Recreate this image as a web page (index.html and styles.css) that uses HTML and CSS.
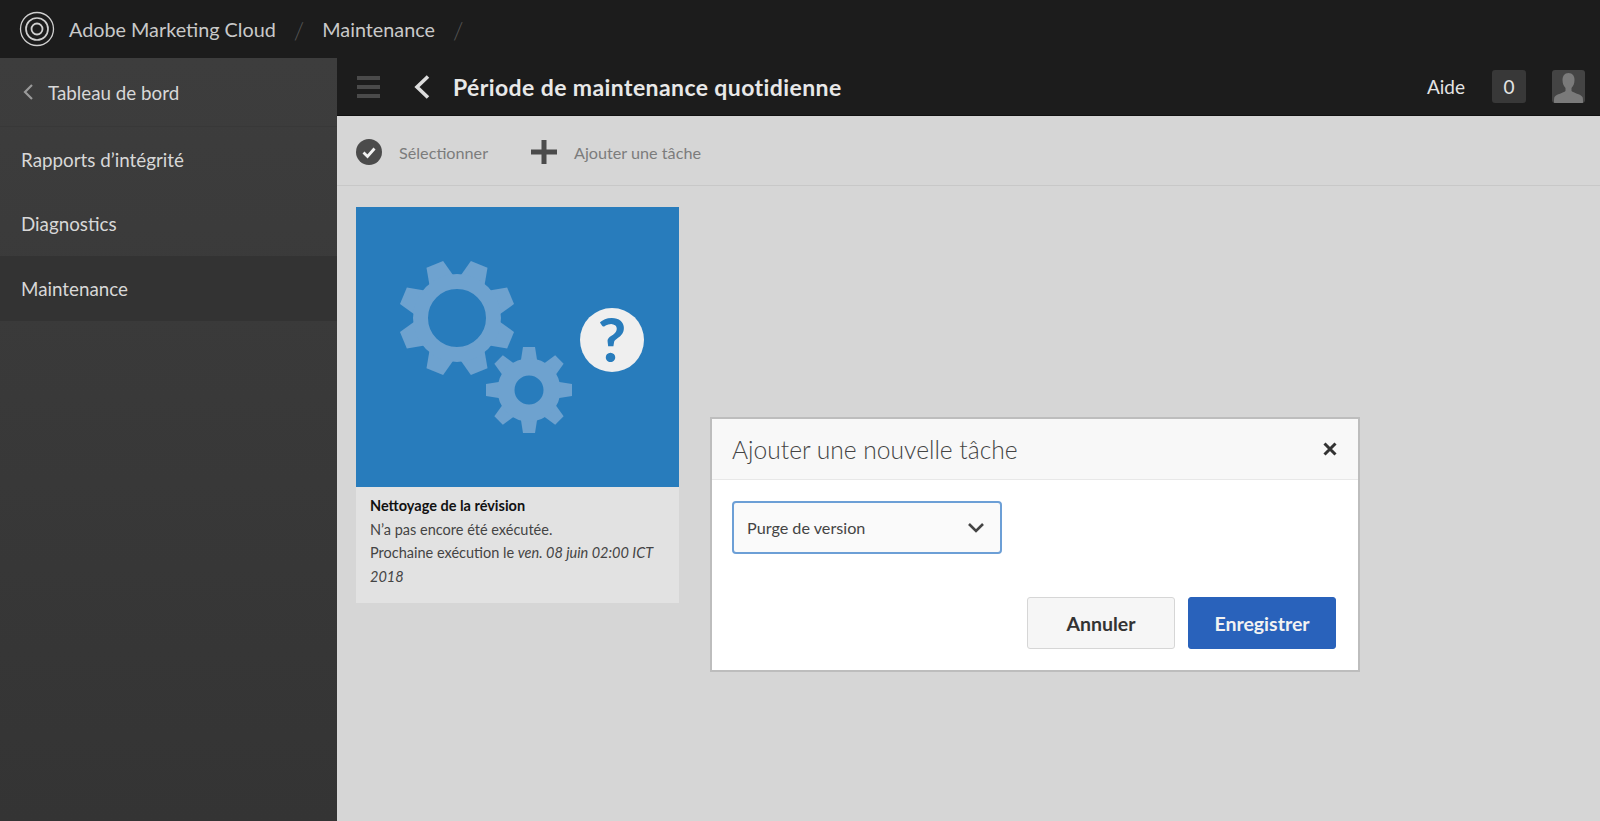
FILE: index.html

```html
<!DOCTYPE html>
<html lang="fr">
<head>
  <meta charset="UTF-8">
  <title>Période de maintenance quotidienne</title>
  <link rel="stylesheet" href="styles.css">
</head>
<body>
  <header class="topbar">
    <svg class="logo" width="36" height="36" viewBox="0 0 36 36" fill="none" stroke="#cfcfcf">
      <circle cx="18" cy="18" r="16.500" stroke-width="1.300"/>
      <circle cx="18" cy="18" r="11" stroke-width="1.700"/>
      <circle cx="18" cy="18" r="5.500" stroke-width="1.800"/>
    </svg>
    <span class="crumb">Adobe Marketing Cloud</span>
    <span class="slash">/</span>
    <span class="crumb">Maintenance</span>
    <span class="slash">/</span>
  </header>

  <div class="app">
    <nav class="sidebar">
      <a class="nav-item nav-back">
        <svg width="12" height="18" viewBox="0 0 12 18" fill="none" stroke="#9a9a9a" stroke-width="2.200"><path d="M10 2 3 9l7 7"/></svg>
        Tableau de bord
      </a>
      <a class="nav-item">Rapports d’intégrité</a>
      <a class="nav-item">Diagnostics</a>
      <a class="nav-item active">Maintenance</a>
    </nav>

    <main class="main">
      <div class="titlebar">
        <div class="hamburger"><i></i><i></i><i></i></div>
        <svg class="back" width="18" height="26" viewBox="0 0 18 26" fill="none" stroke="#dcdcdc" stroke-width="3.600"><path d="M15 2.500 4 13l11 10.500"/></svg>
        <h1>Période de maintenance quotidienne</h1>
        <span class="help">Aide</span>
        <span class="count">0</span>
        <span class="avatar">
          <svg width="33" height="33" viewBox="0 0 33 33" fill="#7a7a7a"><path d="M16.500 3c-4 0-6 3-6 7 0 3 1 6 3 8v3c-2 2-9 3-11 6-.5 1-.5 3-.5 6h29c0-3 0-5-.5-6-2-3-9-4-11-6v-3c2-2 3-5 3-8 0-4-2-7-6-7z"/></svg>
        </span>
      </div>

      <div class="toolbar">
        <span class="tool">
          <svg width="26" height="26" viewBox="0 0 26 26"><circle cx="13" cy="13" r="13" fill="#4b4b4b"/><path d="M7.500 13.500l4 4 7-8" fill="none" stroke="#f2f2f2" stroke-width="2.800"/></svg>
          Sélectionner
        </span>
        <span class="tool">
          <svg width="26" height="26" viewBox="0 0 26 26" fill="#4b4b4b"><path d="M10.500 1h5v9.500H26v5H15.500V25h-5v-9.500H0v-5h10.500z"/></svg>
          Ajouter une tâche
        </span>
      </div>

      <div class="content">
        <article class="card">
          <div class="card-thumb">
            <svg width="323" height="280" viewBox="0 0 323 280">
              <defs>
                <polygon id="tooth-big" points="-9,-58 9,-58 14,-36 -14,-36"/>
                <polygon id="tooth-small" points="-6,-43 6,-43 9,-24 -9,-24"/>
              </defs>
              <g transform="translate(101 111)" fill="#6ea2cf">
                <use href="#tooth-big" transform="rotate(22.500)"/>
                <use href="#tooth-big" transform="rotate(67.500)"/>
                <use href="#tooth-big" transform="rotate(112.500)"/>
                <use href="#tooth-big" transform="rotate(157.500)"/>
                <use href="#tooth-big" transform="rotate(202.500)"/>
                <use href="#tooth-big" transform="rotate(247.500)"/>
                <use href="#tooth-big" transform="rotate(292.500)"/>
                <use href="#tooth-big" transform="rotate(337.500)"/>
                <circle r="36.500" fill="none" stroke="#6ea2cf" stroke-width="15"/>
              </g>
              <g transform="translate(173 183)" fill="#6ea2cf">
                <use href="#tooth-small"/>
                <use href="#tooth-small" transform="rotate(45)"/>
                <use href="#tooth-small" transform="rotate(90)"/>
                <use href="#tooth-small" transform="rotate(135)"/>
                <use href="#tooth-small" transform="rotate(180)"/>
                <use href="#tooth-small" transform="rotate(225)"/>
                <use href="#tooth-small" transform="rotate(270)"/>
                <use href="#tooth-small" transform="rotate(315)"/>
                <circle r="23" fill="none" stroke="#6ea2cf" stroke-width="17"/>
              </g>
              <circle cx="256" cy="133" r="32" fill="#efefef"/>
              <text x="256" y="155" class="qmark">?</text>
            </svg>
          </div>
          <div class="card-info">
            <strong>Nettoyage de la révision</strong>
            <p>N’a pas encore été exécutée.</p>
            <p>Prochaine exécution le <em>ven. 08 juin 02:00 ICT</em> <em>2018</em></p>
          </div>
        </article>
      </div>
    </main>
  </div>

  <section class="modal">
    <div class="modal-head">
      <h2>Ajouter une nouvelle tâche</h2>
      <svg width="14" height="14" viewBox="0 0 14 14" stroke="#333" stroke-width="3" fill="none"><path d="M1.500 1.500l11 11M12.500 1.500l-11 11"/></svg>
    </div>
    <div class="modal-body">
      <div class="select">
        <span>Purge de version</span>
        <svg width="18" height="12" viewBox="0 0 18 12" fill="none" stroke="#444" stroke-width="2.600"><path d="M2 2l7 7 7-7"/></svg>
      </div>
      <div class="actions">
        <button class="btn">Annuler</button>
        <button class="btn btn-primary">Enregistrer</button>
      </div>
    </div>
  </section>
</body>
</html>
```

FILE: styles.css

```css
* { box-sizing: border-box; }
html, body { height: 100%; }
body { margin: 0; font-family: "Lato", "Open Sans", sans-serif; background: #d6d6d6; color: #333; overflow: hidden; display: flex; flex-direction: column; }

.topbar { height: 58px; flex: none; background: #1c1c1c; display: flex; align-items: center; padding-left: 19px; color: #c9c9c9; font-size: 19.800px; }
.logo { margin-right: 14px; }
.slash { color: #555; margin: 0 18px; font-size: 24px; font-weight: 300; }

.app { flex: 1; display: flex; min-height: 0; }

.sidebar { width: 337px; flex: none; background: linear-gradient(#3d3d3d, #343434); color: #d8d8d8; font-size: 18.800px; }
.nav-item { display: flex; align-items: center; height: 64.500px; padding-left: 21px; }
.nav-back { height: 69px; padding-left: 22px; gap: 14px; border-bottom: 1px solid #383838; }
.active { background: #333; }

.main { flex: 1; min-width: 0; display: flex; flex-direction: column; }

.titlebar { height: 58px; flex: none; background: #1c1c1c; display: flex; align-items: center; padding-left: 20px; border-bottom: 1px solid #111; }
.hamburger { width: 23px; display: flex; flex-direction: column; gap: 5px; }
.hamburger i { display: block; height: 4px; background: #4a4a4a; }
.back { margin-left: 33px; }
.titlebar h1 { margin: 0 0 0 22px; font-size: 23px; font-weight: 700; letter-spacing: 0.400px; color: #e8e8e8; flex: 1; }
.help { color: #e4e4e4; font-size: 19px; }
.count { width: 34px; height: 33px; margin-left: 27px; background: #383838; border-radius: 3px; color: #e4e4e4; font-size: 19px; display: flex; align-items: center; justify-content: center; }
.avatar { width: 33px; height: 33px; margin: 0 15px 0 26px; background: #444; border-radius: 3px; overflow: hidden; display: block; }

.toolbar { height: 70px; flex: none; display: flex; align-items: center; padding: 3px 0 0 19px; gap: 43px; border-bottom: 1px solid #c8c8c8; }
.tool { display: flex; align-items: center; gap: 17px; font-size: 16.200px; color: #7c7c7c; }

.content { flex: 1; padding: 21px 19px; }
.card { width: 323px; }
.card-thumb { height: 280px; background: #287cbc; }
.card-thumb svg { display: block; }
.qmark { font-size: 62px; font-weight: 700; fill: #287cbc; text-anchor: middle; }
.card-info { height: 116px; background: #e2e2e2; padding: 7px 14px; font-size: 14.500px; line-height: 23.500px; color: #444; }
.card-info strong { color: #111; display: block; }
.card-info p { margin: 0; }

.modal { position: absolute; left: 710px; top: 417px; width: 650px; height: 255px; background: #fff; border: 2px solid #bdbdbd; }
.modal-head { height: 61px; background: #f8f8f8; border-bottom: 1px solid #e8e8e8; display: flex; align-items: center; justify-content: space-between; padding: 0 21px 0 20px; }
.modal-head h2 { margin: 0; font-size: 24.600px; font-weight: 300; color: #444; }
.modal-body { padding: 21px 22px 0 20px; }
.select { width: 270px; height: 53px; background: #fafafa; border: 2px solid #6c9fd6; border-radius: 4px; display: flex; align-items: center; justify-content: space-between; padding: 0 15px 0 13px; font-size: 16.200px; color: #444; }
.actions { display: flex; justify-content: flex-end; gap: 13px; margin-top: 43px; }
.btn { width: 148px; height: 52px; font: 700 19.500px "Lato", sans-serif; background: #f6f6f6; border: 1px solid #d6d6d6; border-radius: 3px; color: #333; }
.btn-primary { background: #2962bb; border-color: #2962bb; color: #f2f2f2; }
```
